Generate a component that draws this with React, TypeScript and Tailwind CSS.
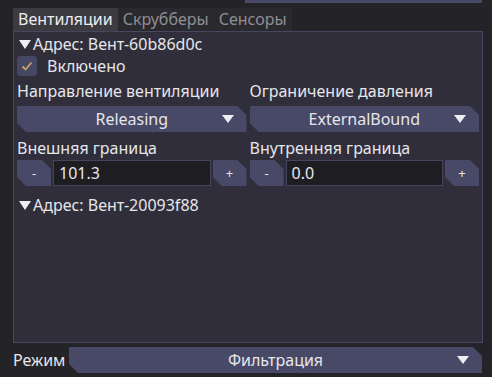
import React from "react";

const font = { fontFamily: '"Noto Sans", "DejaVu Sans", sans-serif' };

function Arrow({ w = 12, h = 8 }: { w?: number; h?: number }) {
  return (
    <svg width={w} height={h} viewBox={`0 0 ${w} ${h}`}>
      <polygon points={`0,0 ${w},0 ${w / 2},${h}`} fill="#eeeef2" />
    </svg>
  );
}

function Dropdown({ value, className = "" }: { value: string; className?: string }) {
  return (
    <div
      className={`relative flex h-[26px] items-center justify-center bg-[#474966] text-[#e6e6ea] [clip-path:polygon(0_0,calc(100%-9px)_0,100%_9px,100%_100%,9px_100%,0_calc(100%-9px))] ${className}`}
    >
      <span>{value}</span>
      <span className="absolute right-[13px] top-[9px] flex">
        <Arrow />
      </span>
    </div>
  );
}

function StepButton({ label }: { label: string }) {
  return (
    <div className="flex h-[26px] w-[34px] shrink-0 items-center justify-center bg-[#474966] text-[13px] text-[#e6e6ea] [clip-path:polygon(0_0,calc(100%-9px)_0,100%_9px,100%_100%,9px_100%,0_calc(100%-9px))]">
      {label}
    </div>
  );
}

function SpinBox({ value }: { value: string }) {
  return (
    <div className="flex items-center gap-[2px]">
      <StepButton label="-" />
      <div className="flex h-[26px] flex-1 items-center border border-[#44455c] bg-[#1e1e22] px-[5px] text-[#e6e6ea]">
        {value}
      </div>
      <StepButton label="+" />
    </div>
  );
}

function Address({ text, className = "" }: { text: string; className?: string }) {
  return (
    <div className={`flex h-[18px] items-center pl-[2px] ${className}`}>
      <span className="mr-[2px] flex">
        <Arrow w={12} h={9} />
      </span>
      <span>{text}</span>
    </div>
  );
}

export default function App() {
  return (
    <div
      className="flex h-[377px] w-[492px] flex-col overflow-hidden bg-[#242328] text-[16px] leading-[18px] text-[#e6e6ea]"
      style={font}
    >
      <div className="ml-[245px] h-[3px] w-[237px] bg-[#474966]" />

      <div className="mt-[5px] flex h-[23px] px-[13px] leading-[23px]">
        <div className="bg-[#3b3b40] px-[5px] text-[#ececef]">Вентиляции</div>
        <div className="bg-[#2a292e] px-[5px] text-[#8e8e94]">Скрубберы</div>
        <div className="bg-[#2a292e] px-[5px] text-[#8e8e94]">Сенсоры</div>
      </div>

      <div className="ml-[13px] mr-[9px] flex h-[312px] flex-col border border-[#45465f] bg-[#2f2e3a] px-[3px] pt-[3px]">
        <Address text="Адрес: Вент-60b86d0c" />
        <div className="mt-[3px] flex h-[20px] items-center">
          <div className="flex h-[20px] w-[20px] items-center justify-center rounded-[3px] bg-[#464863]">
            <svg width="12" height="10" viewBox="0 0 12 10">
              <path d="M1.5 5.5 L4.5 8.5 L10.5 1.5" fill="none" stroke="#c9a06a" strokeWidth="1.8" />
            </svg>
          </div>
          <span className="ml-[10px]">Включено</span>
        </div>

        <div className="mt-[6px] grid grid-cols-2 gap-x-[3px]">
          <div className="flex flex-col">
            <div className="h-[18px]">Направление вентиляции</div>
            <Dropdown value="Releasing" className="mt-[6px]" />
            <div className="mt-[7px] h-[18px]">Внешняя граница</div>
            <div className="mt-[3px]">
              <SpinBox value="101.3" />
            </div>
          </div>
          <div className="flex flex-col">
            <div className="h-[18px]">Ограничение давления</div>
            <Dropdown value="ExternalBound" className="mt-[6px]" />
            <div className="mt-[7px] h-[18px]">Внутренняя граница</div>
            <div className="mt-[3px]">
              <SpinBox value="0.0" />
            </div>
          </div>
        </div>

        <Address text="Адрес: Вент-20093f88" className="mt-[10px]" />
      </div>

      <div className="mt-[4px] flex items-center pl-[13px] pr-[10px]">
        <span className="w-[56px]">Режим</span>
        <Dropdown value="Фильтрация" className="flex-1" />
      </div>
    </div>
  );
}
